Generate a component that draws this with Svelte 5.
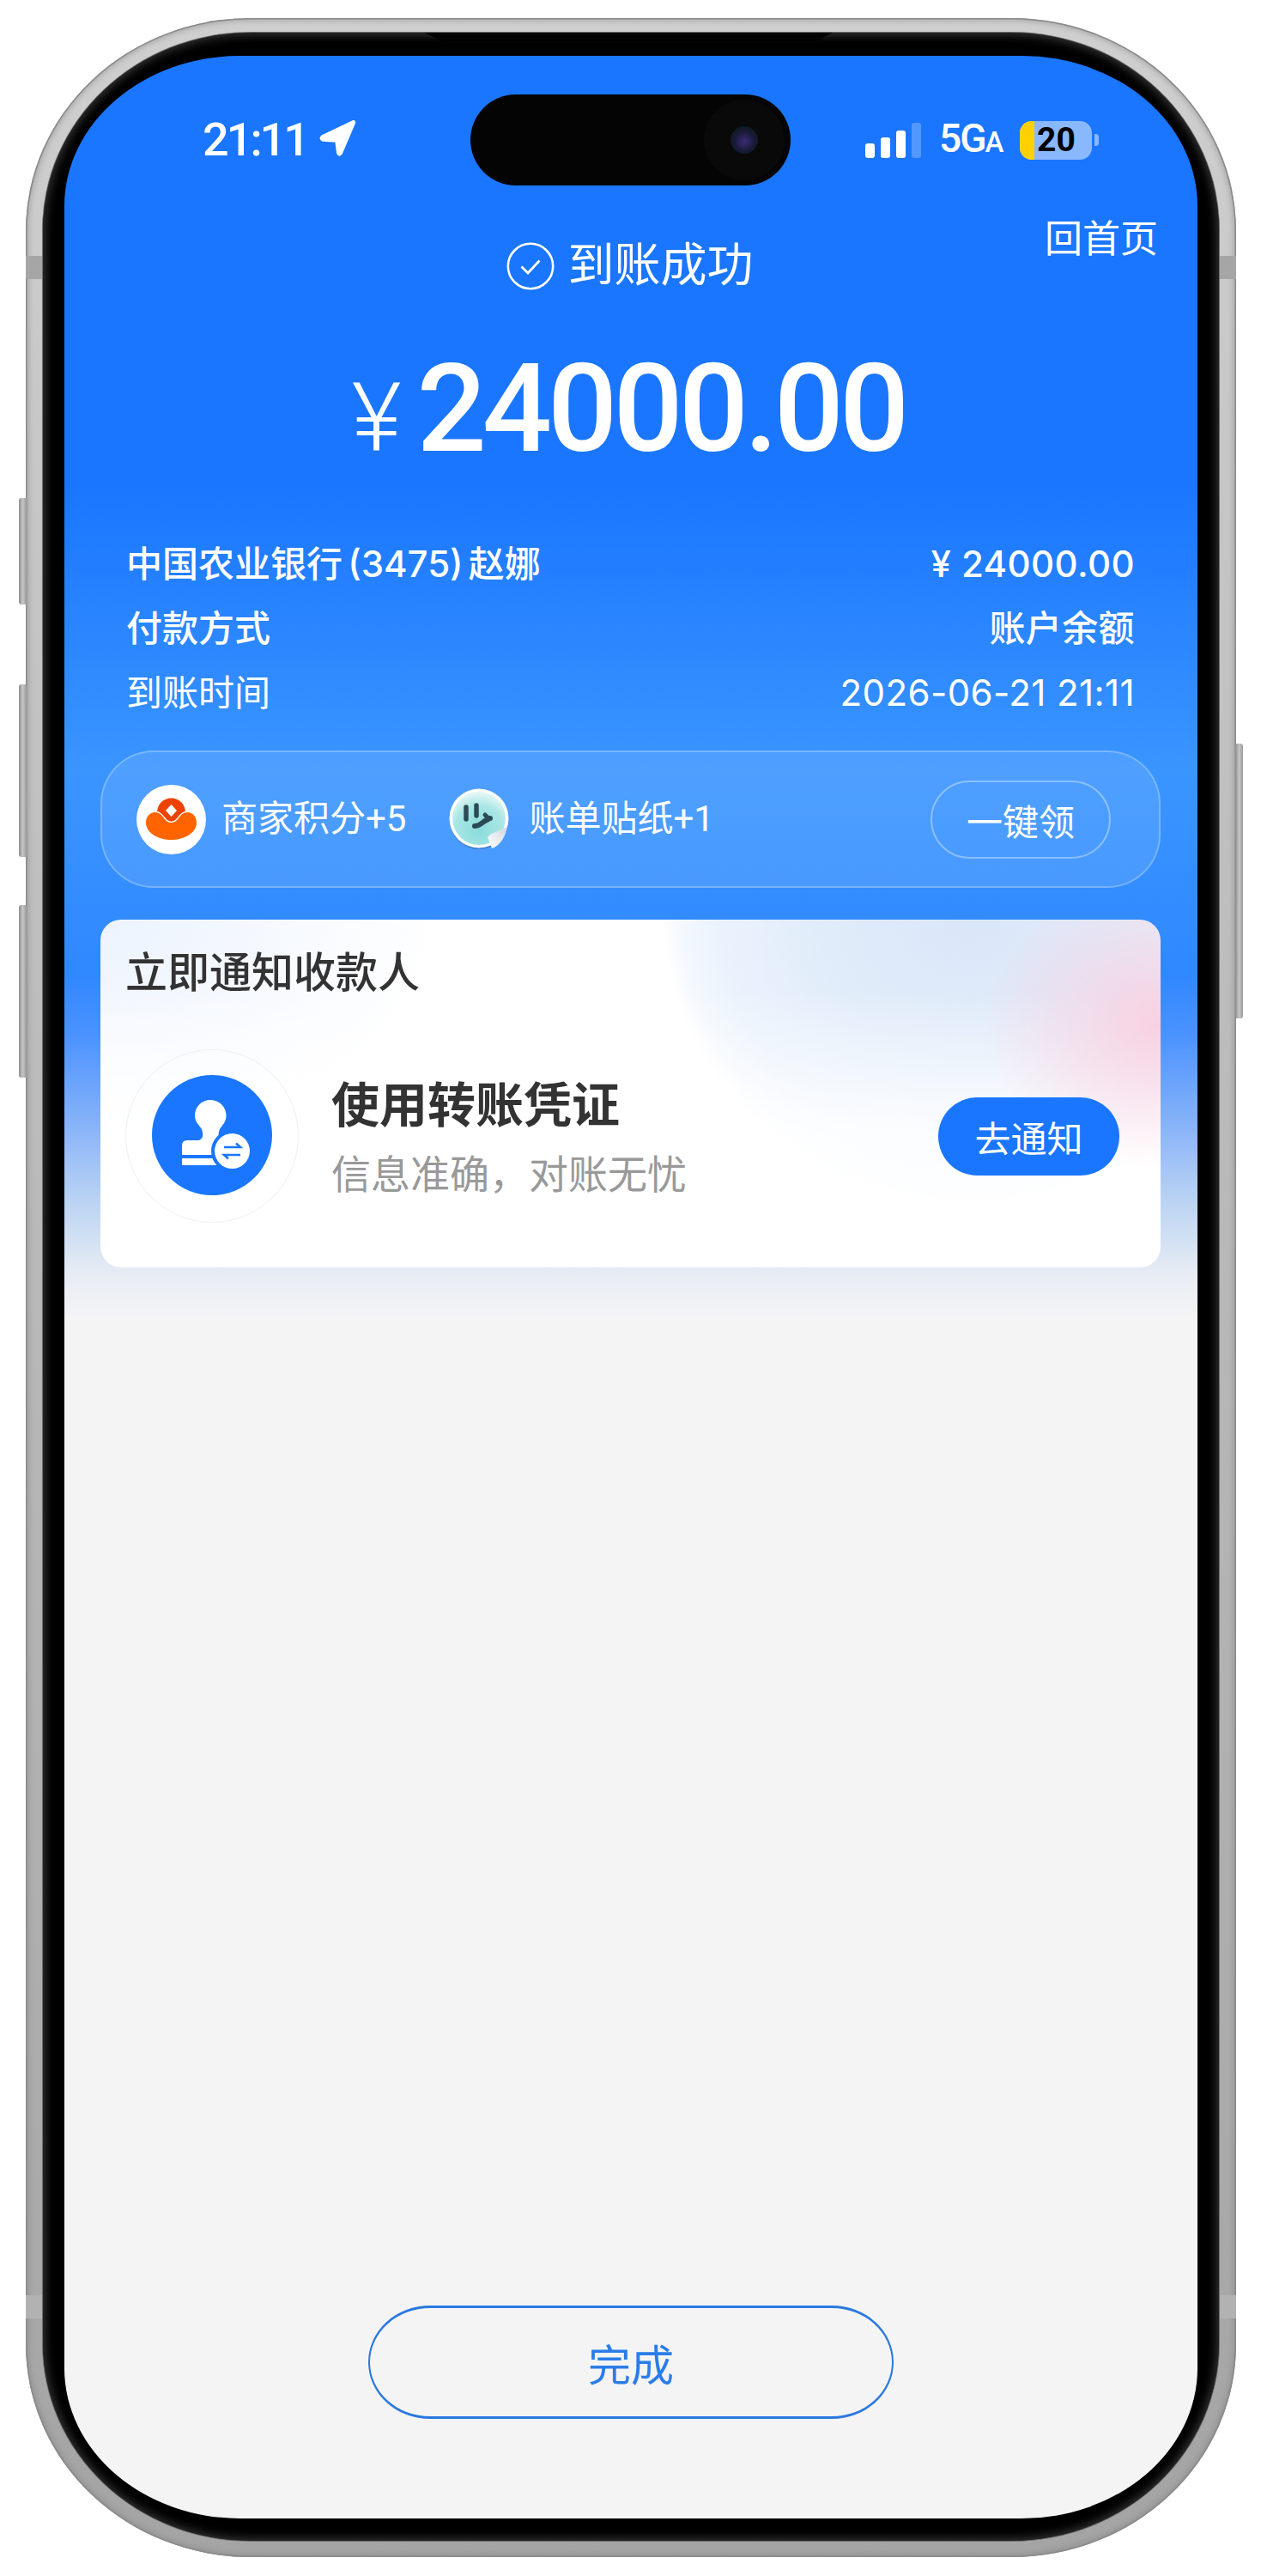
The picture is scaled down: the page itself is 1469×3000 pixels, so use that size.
<script lang="ts">
  const rows = [
    { left: "中国农业银行 (3475) 赵娜", right: "¥ 24000.00", strong: true },
    { left: "付款方式", right: "账户余额", strong: true },
    { left: "到账时间", right: "2026-06-21 21:11", strong: false }
  ];
</script>

<div class="page">
  <div class="phone">
    <!-- side buttons and antenna bands -->
    <span class="key key-a"></span>
    <span class="key key-b"></span>
    <span class="key key-c"></span>
    <span class="key key-d"></span>
    <span class="band band-tl"></span>
    <span class="band band-tr"></span>
    <span class="band band-bl"></span>
    <span class="band band-br"></span>

    <div class="bezel">
      <span class="speaker"></span>
      <div class="screen">
        <div class="island">
          <div class="lens-ring"><div class="lens"></div></div>
        </div>

        <div class="status">
          <div class="status-left">
            <span class="time">21:11</span>
            <svg class="loc" viewBox="0 0 42 42"><path d="M39 1 3 18Q-1 22 4 24L19 25 21 39Q23 43 26 39L41 4Q42 0 39 1Z" fill="#fff" stroke="#fff" stroke-width="1.5" /></svg>
          </div>
          <div class="status-right">
            <div class="signal">
              <i class="b1"></i><i class="b2"></i><i class="b3"></i><i class="b4"></i>
            </div>
            <span class="net">5G<small>A</small></span>
            <div class="battery">
              <div class="cell"><span class="level"></span><span class="pct">20</span></div>
              <span class="nub"></span>
            </div>
          </div>
        </div>

        <div class="head">
          <span></span>
          <div class="state">
            <svg class="check" viewBox="0 0 56 56" fill="none" stroke="#fff">
              <circle cx="28" cy="28" r="26.2" stroke-width="2.6" />
              <path d="M17.5 28.5 25 36 38.5 21.5" stroke-width="2.8" />
            </svg>
            <span>到账成功</span>
          </div>
          <span class="home">回首页</span>
        </div>

        <div class="amount">
          <span class="yen">¥</span>
          <span class="num">24000.00</span>
        </div>

        <div class="rows">
          {#each rows as row}
            <div class="row" class:strong={row.strong}>
              <span class="row-left">{row.left}</span>
              <span class="row-right">{row.right}</span>
            </div>
          {/each}
        </div>

        <div class="rewards">
          <svg class="coin" viewBox="0 0 81 81">
            <circle cx="40.5" cy="40.5" r="40.5" fill="#fff" />
            <circle cx="40.5" cy="32" r="16.5" fill="#ec4400" />
            <path d="M11 44C11 34 20 30 26 33 32 36 33 44 40.5 44 48 44 49 36 55 33 61 30 70 34 70 44 70 56 56 64 40.5 64 25 64 11 56 11 44Z" fill="#ff6400" stroke="#fff" stroke-width="2.6" paint-order="stroke" />
            <path d="M40.5 23 47 30 40.5 37 34 30Z" fill="#fff" />
          </svg>
          <span class="reward-text first">商家积分+5</span>
          <svg class="sticker" viewBox="0 0 70 72">
            <defs>
              <radialGradient id="teal" cx="0.5" cy="0.72" r="0.7">
                <stop offset="0" stop-color="#8adcdc" />
                <stop offset="0.65" stop-color="#a8e6e4" />
                <stop offset="1" stop-color="#e4f7f6" />
              </radialGradient>
              <linearGradient id="peel" x1="0" y1="1" x2="1" y2="0">
                <stop offset="0" stop-color="#fff" />
                <stop offset="1" stop-color="#cfd6de" />
              </linearGradient>
            </defs>
            <circle cx="35" cy="37" r="34" fill="#2c4f6e" opacity="0.35" />
            <circle cx="35" cy="35" r="34.5" fill="#fff" />
            <circle cx="35" cy="35" r="31" fill="url(#teal)" />
            <g fill="none" stroke="#2b4a55" stroke-linecap="round">
              <path d="M20 22V36" stroke-width="5.5" />
              <path d="M32 20V32" stroke-width="5.5" />
              <path d="M30 44C37 44 40 38 44 37 46 36 47 35 48 35" stroke-width="6" />
              <path d="M42 31 46 35" stroke-width="5" />
            </g>
            <path d="M68 44C62 50 50 50 45 57 47 62 49 67 50 70 60 67 66 56 68 44Z" fill="url(#peel)" />
          </svg>
          <span class="reward-text">账单贴纸+1</span>
          <button class="claim">一键领</button>
        </div>

        <div class="card">
          <div class="card-title">立即通知收款人</div>
          <div class="card-body">
            <div class="ring">
              <svg class="stamp" viewBox="0 0 140 140">
                <circle cx="70" cy="70" r="70" fill="#1a76ff" />
                <path d="M68 29C58 29 50 37 50 47 50 55 55 58 58 63 60 68 60 74 55 76H41Q35 76 35 82V93H85V76H80C77 72 77 68 79 63 82 58 86.5 55 86.5 47 86.5 37 78 29 68 29Z" fill="#fff" />
                <rect x="35" y="97" width="42" height="8" fill="#fff" />
                <circle cx="93.500" cy="88.500" r="24.500" fill="#1a76ff" />
                <circle cx="93.500" cy="88.500" r="20.500" fill="#fff" />
                <path d="M84 84H103L98 79.500M103 93H84L89 97.500" fill="none" stroke="#1a76ff" stroke-width="2.600" />
              </svg>
            </div>
            <div class="card-text">
              <div class="card-head">使用转账凭证</div>
              <div class="card-sub">信息准确，对账无忧</div>
            </div>
            <button class="notify">去通知</button>
          </div>
        </div>

        <button class="done">完成</button>
      </div>
    </div>
  </div>
</div>

<style>
  :global(body) {
    margin: 0;
    background: #fff;
  }

  .page {
    height: 3000px;
    box-sizing: border-box;
    padding: 21px 0 0 30px;
    background: #fff;
    font-family: Roboto, "Noto Sans CJK SC", sans-serif;
  }

  .phone {
    position: relative;
    width: 1410px;
    height: 2957px;
    box-sizing: border-box;
    padding: 17px 20px 19px 20px;
    border-radius: 262px / 248px;
    background: linear-gradient(180deg, #cfcfcf 0%, #bcbcbc 40%, #a4a4a4 100%);
    box-shadow: inset 0 0 0 1.5px #8a8a8a, inset 0 0 6px 3px rgba(120, 120, 120, 0.45);
  }

  .key {
    position: absolute;
    width: 9px;
    background: linear-gradient(90deg, #8c8c8c, #c6c6c6 50%, #9a9a9a);
    border-radius: 3px 0 0 3px;
  }
  .key-a { left: -8px; top: 559px; height: 124px; }
  .key-b { left: -8px; top: 776px; height: 201px; }
  .key-c { left: -8px; top: 1033px; height: 201px; }
  .key-d {
    right: -8px;
    top: 845px;
    height: 320px;
    border-radius: 0 3px 3px 0;
  }

  .band {
    position: absolute;
    width: 20px;
    height: 27px;
    background: #a6a6a6;
  }
  .band-tl { left: 0; top: 277px; }
  .band-tr { right: 0; top: 277px; }
  .band-bl { left: 0; top: 2652px; background: #b2b2b2; }
  .band-br { right: 0; top: 2652px; background: #b2b2b2; }

  .bezel {
    position: relative;
    height: 100%;
    box-sizing: border-box;
    padding: 27px 25px 26px 25px;
    border-radius: 242px / 230px;
    background: #000;
    box-shadow: inset 0 0 12px 2px #3c3c3c, 0 0 0 1px #6e6e6e;
  }

  .speaker {
    position: absolute;
    left: 445px;
    top: 0;
    width: 475px;
    height: 10px;
    background: #000;
    clip-path: polygon(0 0, 100% 0, 96% 100%, 4% 100%);
  }

  .screen {
    position: relative;
    display: flex;
    flex-direction: column;
    height: 100%;
    overflow: hidden;
    border-radius: 205px / 175px;
    color: #fff;
    background: linear-gradient(
      180deg,
      #1a76ff 0,
      #1a76ff 500px,
      #3a95ff 830px,
      #3088ff 1070px,
      #4a92ff 1140px,
      #90b8f8 1260px,
      #bed5f3 1340px,
      #e8edf4 1420px,
      #f4f4f5 1470px
    );
  }

  /* status bar */
  .island {
    position: absolute;
    left: 473px;
    top: 45px;
    width: 373px;
    height: 106px;
    border-radius: 53px;
    background: #040404;
  }

  .lens-ring {
    position: absolute;
    left: 272px;
    top: 6px;
    width: 94px;
    height: 94px;
    box-sizing: border-box;
    padding: 31px;
    border-radius: 50%;
    background: #090909;
  }

  .lens {
    height: 100%;
    border-radius: 50%;
    background: radial-gradient(circle at 50% 55%, #3b2d78 0, #1a1b3a 45%, #0c1a22 75%, #050505 100%);
  }

  .status {
    display: flex;
    justify-content: space-between;
    align-items: center;
    height: 196px;
    flex: none;
    padding: 0 115px 0 161px;
  }

  .status-left {
    display: flex;
    align-items: center;
    gap: 14px;
  }

  .time {
    font-size: 54px;
    font-weight: 500;
    line-height: 54px;
    letter-spacing: -3px;
  }

  .loc {
    width: 42px;
    height: 42px;
    margin-top: -4px;
  }

  .status-right {
    display: flex;
    align-items: center;
  }

  .signal {
    display: flex;
    align-items: flex-end;
    gap: 7px;
    height: 41px;
    margin: 0 21px 0 0;
  }

  .signal i {
    display: block;
    width: 11px;
    border-radius: 3px;
    background: #fff;
  }
  .signal .b1 { height: 17px; }
  .signal .b2 { height: 24px; }
  .signal .b3 { height: 32px; }
  .signal .b4 { height: 41px; background: rgba(255, 255, 255, 0.25); }

  .net {
    width: 94px;
    font-size: 46px;
    font-weight: 500;
    line-height: 46px;
    letter-spacing: -2px;
  }

  .net small {
    font-size: 33px;
  }

  .battery {
    display: flex;
    align-items: center;
    gap: 3px;
  }

  .cell {
    position: relative;
    display: flex;
    width: 84px;
    height: 45px;
    overflow: hidden;
    border-radius: 14px;
    background: #8ab8ff;
  }

  .level {
    width: 17px;
    background: #ffd000;
  }

  .pct {
    width: 51px;
    color: #000;
    font-size: 39px;
    font-weight: 700;
    line-height: 45px;
    text-align: center;
  }

  .nub {
    width: 5px;
    height: 14px;
    border-radius: 0 4px 4px 0;
    background: #8ab8ff;
  }

  /* header */
  .head {
    display: grid;
    grid-template-columns: 1fr auto 1fr;
    height: 98px;
    flex: none;
    align-items: center;
  }

  .state {
    display: flex;
    align-items: center;
    gap: 16px;
    margin-left: -3px;
    font-size: 54px;
    line-height: 60px;
  }

  .check {
    width: 56px;
    height: 56px;
  }

  .home {
    justify-self: end;
    align-self: start;
    margin: -4px 46px 0 0;
    font-size: 44px;
    line-height: 44px;
  }

  .amount {
    display: flex;
    justify-content: center;
    align-items: baseline;
    gap: 18px;
    margin-top: 46px;
    padding-right: 6px;
    flex: none;
  }

  .yen {
    font-size: 112px;
    font-weight: 300;
    line-height: 143px;
  }

  .num {
    font-size: 143px;
    font-weight: 500;
    line-height: 143px;
    letter-spacing: -5px;
  }

  .rows {
    margin-top: 61px;
    padding: 0 73px 0 72px;
    flex: none;
    font-family: Inter, "Noto Sans CJK SC", sans-serif;
  }

  .row {
    display: flex;
    justify-content: space-between;
    align-items: center;
    height: 75px;
    font-size: 42px;
    line-height: 50px;
  }

  .row.strong {
    font-weight: 500;
  }

  .row-left {
    word-spacing: -5px;
  }

  .row-right {
    letter-spacing: 0.4px;
  }

  /* rewards strip */
  .rewards {
    display: flex;
    align-items: center;
    height: 160px;
    flex: none;
    box-sizing: border-box;
    margin: 30px 43px 0 42px;
    padding: 0 56px 0 40px;
    border: 2px solid rgba(255, 255, 255, 0.25);
    border-radius: 62px;
    background: rgba(255, 255, 255, 0.1);
  }

  .coin {
    width: 81px;
    height: 81px;
    flex: none;
  }

  .reward-text {
    margin-left: 18px;
    font-size: 42px;
    line-height: 50px;
  }

  .reward-text.first {
    margin-right: 50px;
  }

  .sticker {
    width: 70px;
    height: 72px;
    flex: none;
    margin-right: 5px;
  }

  .claim {
    width: 210px;
    height: 91px;
    margin-left: auto;
    padding: 0;
    border: 2px solid rgba(255, 255, 255, 0.35);
    border-radius: 46px;
    background: transparent;
    color: #fff;
    font-family: inherit;
    font-size: 42px;
  }

  /* notify card */
  .card {
    height: 405px;
    flex: none;
    box-sizing: border-box;
    margin: 37px 43px 0 42px;
    padding: 33px 48px 0 29px;
    border-radius: 24px;
    color: #333;
    background:
      radial-gradient(ellipse 210px 170px at 100% 30%, rgba(250, 205, 222, 0.9), rgba(250, 205, 222, 0) 100%),
      linear-gradient(180deg, rgba(255, 255, 255, 0) 20%, rgba(255, 255, 255, 0.85) 62%),
      radial-gradient(circle 360px at 1013px -22px, #d9e6f8 0, #e1ecfa 50%, rgba(232, 241, 252, 0.9) 82%, rgba(236, 244, 253, 0.6) 94%, rgba(240, 246, 254, 0) 100%),
      radial-gradient(ellipse 400px 260px at 0 0, rgba(228, 238, 253, 0.7), rgba(228, 238, 253, 0) 100%),
      #fff;
  }

  .card-title {
    font-size: 49px;
    font-weight: 500;
    line-height: 60px;
  }

  .card-body {
    display: flex;
    align-items: center;
    margin-top: 58px;
  }

  .ring {
    width: 202px;
    height: 202px;
    flex: none;
    box-sizing: border-box;
    padding: 29px 30px;
    border: 1.5px solid #eeeff2;
    border-radius: 50%;
  }

  .stamp {
    display: block;
    width: 140px;
    height: 140px;
  }

  .card-text {
    margin-left: 38px;
    padding-top: 5px;
  }

  .card-head {
    font-size: 56px;
    font-weight: 700;
    line-height: 60px;
  }

  .card-sub {
    margin-top: 25px;
    color: #999;
    font-size: 46px;
    line-height: 50px;
  }

  .notify {
    width: 211px;
    height: 91px;
    margin-left: auto;
    padding: 0;
    border: 0;
    border-radius: 46px;
    background: #1a76ff;
    color: #fff;
    font-family: inherit;
    font-size: 42px;
  }

  .done {
    align-self: center;
    width: 612px;
    height: 132px;
    margin: auto 0 116px 0;
    padding: 0;
    border: solid #2a78e0;
    border-width: 3px 2px;
    border-radius: 72px / 66px;
    background: transparent;
    color: #2a7de8;
    font-family: inherit;
    font-size: 50px;
  }
</style>
